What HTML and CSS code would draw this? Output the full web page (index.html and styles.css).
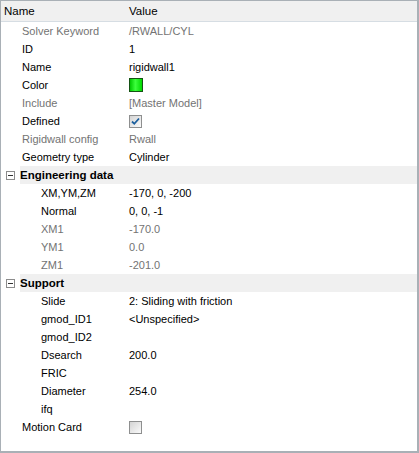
FILE: index.html
```html
<!DOCTYPE html>
<html lang="en">
<head>
    <meta charset="UTF-8">
    <title>Properties</title>
    <link rel="stylesheet" href="styles.css">
</head>
<body>
    <div class="panel">
        <div class="header">
            <span class="name-col">Name</span>
            <span>Value</span>
        </div>
        <div class="row disabled"><span class="name-col l1">Solver Keyword</span><span>/RWALL/CYL</span></div>
        <div class="row"><span class="name-col l1">ID</span><span>1</span></div>
        <div class="row"><span class="name-col l1">Name</span><span>rigidwall1</span></div>
        <div class="row"><span class="name-col l1">Color</span><span class="swatch"></span></div>
        <div class="row disabled"><span class="name-col l1">Include</span><span>[Master Model]</span></div>
        <div class="row"><span class="name-col l1">Defined</span>
            <span class="check">
                <svg width="11" height="11" viewBox="0 0 11 11"><path d="M2 5.5 L4.3 7.8 L9 2.5" fill="none" stroke="#1c5f9e" stroke-width="1.8"/></svg>
            </span>
        </div>
        <div class="row disabled"><span class="name-col l1">Rigidwall config</span><span>Rwall</span></div>
        <div class="row"><span class="name-col l1">Geometry type</span><span>Cylinder</span></div>

        <div class="category">
            <span class="toggle"><span class="minus"></span></span>
            <span class="cat-title">Engineering data</span>
        </div>
        <div class="row"><span class="name-col l2">XM,YM,ZM</span><span>-170, 0, -200</span></div>
        <div class="row"><span class="name-col l2">Normal</span><span>0, 0, -1</span></div>
        <div class="row disabled"><span class="name-col l2">XM1</span><span>-170.0</span></div>
        <div class="row disabled"><span class="name-col l2">YM1</span><span>0.0</span></div>
        <div class="row disabled"><span class="name-col l2">ZM1</span><span>-201.0</span></div>

        <div class="category">
            <span class="toggle"><span class="minus"></span></span>
            <span class="cat-title">Support</span>
        </div>
        <div class="row"><span class="name-col l2">Slide</span><span>2: Sliding with friction</span></div>
        <div class="row"><span class="name-col l2">gmod_ID1</span><span>&lt;Unspecified&gt;</span></div>
        <div class="row"><span class="name-col l2">gmod_ID2</span><span></span></div>
        <div class="row"><span class="name-col l2">Dsearch</span><span>200.0</span></div>
        <div class="row"><span class="name-col l2">FRIC</span><span></span></div>
        <div class="row"><span class="name-col l2">Diameter</span><span>254.0</span></div>
        <div class="row"><span class="name-col l2">ifq</span><span></span></div>
        <div class="row"><span class="name-col l1">Motion Card</span><span class="check empty"></span></div>
    </div>
</body>
</html>
```
FILE: styles.css
```css
body {
    margin: 0;
    font-family: "Liberation Sans", Arial, sans-serif;
    font-size: 11px;
    color: #000;
    background: #fff;
}
.panel {
    box-sizing: border-box;
    width: 419px;
    height: 453px;
    border: 1px solid #a9b0b6;
    border-right-width: 2px;
    border-bottom-width: 2px;
    background: #fff;
}
.header {
    display: flex;
    align-items: center;
    height: 20px;
    background: #f0f0f0;
    border-bottom: 1px solid #d6dde3;
    font-size: 11.5px;
}
.header .name-col {
    padding-left: 3px;
}
.name-col {
    box-sizing: border-box;
    width: 128px;
    flex: none;
}
.row {
    display: flex;
    align-items: center;
    height: 18px;
}
.l1 {
    padding-left: 21px;
}
.l2 {
    padding-left: 40px;
}
.disabled {
    color: #737373;
}
.category {
    display: flex;
    align-items: center;
    height: 18px;
}
.toggle {
    box-sizing: border-box;
    width: 9px;
    height: 9px;
    margin: 0 5px 0 5px;
    border: 1px solid #8c8c8c;
    display: flex;
    align-items: center;
    justify-content: center;
}
.minus {
    width: 5px;
    height: 1px;
    background: #333;
}
.cat-title {
    flex: 1;
    height: 18px;
    line-height: 18px;
    background: #f0f0f0;
    font-weight: bold;
    font-size: 11.5px;
}
.swatch {
    box-sizing: border-box;
    width: 14px;
    height: 14px;
    border: 1px solid #145214;
    background: linear-gradient(90deg, #00c800, #3cff3c 45%, #00d800);
}
.check {
    box-sizing: border-box;
    width: 13px;
    height: 13px;
    border: 1px solid #8e8f8f;
    background: linear-gradient(135deg, #d4d4d4, #fafafa);
    display: flex;
    align-items: center;
    justify-content: center;
}
```
